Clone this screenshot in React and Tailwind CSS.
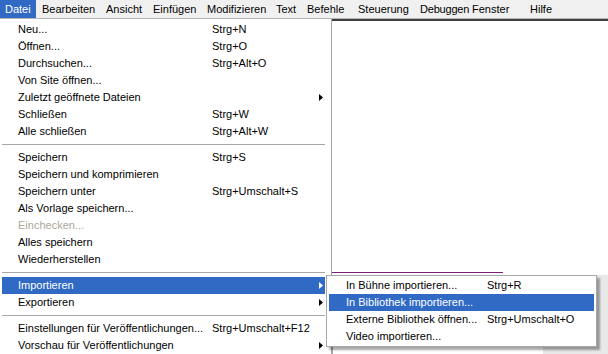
import React from 'react';

const menuBar = [
  { label: 'Datei', w: 'w-[36px] pl-[5px]', active: true },
  { label: 'Bearbeiten', w: 'w-[64px] pl-[6px]' },
  { label: 'Ansicht', w: 'w-[47px] pl-[6px]' },
  { label: 'Einfügen', w: 'w-[54px] pl-[6px]' },
  { label: 'Modifizieren', w: 'w-[69px] pl-[6px]' },
  { label: 'Text', w: 'w-[31px] pl-[6px]' },
  { label: 'Befehle', w: 'w-[51px] pl-[6px]' },
  { label: 'Steuerung', w: 'w-[62px] pl-[6px]' },
  { label: 'Debuggen', w: 'w-[52px] pl-[6px] tracking-[-0.2px]' },
  { label: 'Fenster', w: 'w-[58px] pl-[6px]' },
  { label: 'Hilfe', w: 'w-[40px] pl-[6px]' },
];

const fileMenu = [
  { label: 'Neu...', key: 'Strg+N' },
  { label: 'Öffnen...', key: 'Strg+O' },
  { label: 'Durchsuchen...', key: 'Strg+Alt+O' },
  { label: 'Von Site öffnen...' },
  { label: 'Zuletzt geöffnete Dateien', sub: true },
  { label: 'Schließen', key: 'Strg+W' },
  { label: 'Alle schließen', key: 'Strg+Alt+W' },
  'sep',
  { label: 'Speichern', key: 'Strg+S' },
  { label: 'Speichern und komprimieren' },
  { label: 'Speichern unter', key: 'Strg+Umschalt+S' },
  { label: 'Als Vorlage speichern...' },
  { label: 'Einchecken...', disabled: true },
  { label: 'Alles speichern' },
  { label: 'Wiederherstellen' },
  'sep',
  { label: 'Importieren', sub: true, active: true },
  { label: 'Exportieren', sub: true },
  'sep',
  { label: 'Einstellungen für Veröffentlichungen...', key: 'Strg+Umschalt+F12' },
  { label: 'Vorschau für Veröffentlichungen', sub: true },
];

const importMenu = [
  { label: 'In Bühne importieren...', key: 'Strg+R' },
  { label: 'In Bibliothek importieren...', active: true },
  { label: 'Externe Bibliothek öffnen...', key: 'Strg+Umschalt+O' },
  { label: 'Video importieren...' },
];

function Arrow({ white }) {
  return (
    <svg width="4" height="7" viewBox="0 0 4 7" className="ml-auto mr-[2px]">
      <path d="M0 0 L4 3.5 L0 7 Z" fill={white ? '#ffffff' : '#000000'} />
    </svg>
  );
}

function Row({ item, labelW, pl }) {
  const color = item.active ? 'bg-[#316ac5] text-white' : item.disabled ? 'text-[#aca899]' : 'text-black';
  return (
    <div className={`h-[17px] flex items-center whitespace-nowrap ${pl} ${color}`}>
      <span className={`${labelW} shrink-0`}>{item.label}</span>
      {item.key && <span>{item.key}</span>}
      {item.sub && <Arrow white={item.active} />}
    </div>
  );
}

export default function App() {
  return (
    <div
      className="relative w-[608px] h-[354px] overflow-hidden bg-white text-[11px] leading-none text-black"
      style={{ fontFamily: '"Liberation Sans", Arial, sans-serif' }}
    >
      <div className="flex h-[19px] bg-[#f0f0f0] border-b border-[#b4b4b4]">
        {menuBar.map((m) => (
          <div
            key={m.label}
            className={`h-[18px] flex items-center whitespace-nowrap ${m.w} ${m.active ? 'bg-[#316ac5] text-white' : ''}`}
          >
            {m.label}
          </div>
        ))}
      </div>

      <div className="flex h-[335px]">
        <div className="w-[332px] shrink-0 border-r border-[#a7a6aa] pl-[2px] pr-[6px] pt-[2px]">
          {fileMenu.map((item, i) =>
            item === 'sep' ? (
              <div key={i} className="h-[9px] flex items-center">
                <div className="w-full h-px bg-[#a7a6aa]" />
              </div>
            ) : (
              <Row key={i} item={item} labelW="w-[194px]" pl="pl-[16px]" />
            )
          )}
        </div>

        <div className="flex-1 flex flex-col">
          <div className="h-[2px] bg-[#404040]" />
          <div className="h-[251px]" />
          <div className="flex">
            <div className="w-[171px] h-px bg-[#7a1f7a]" />
          </div>
          <div className="flex flex-1 pt-[2px]">
            <div className="w-[211px] border-l border-[#a7a6aa]" />
            <div className="flex-1 bg-[#e8e8e8]" />
          </div>
        </div>
      </div>

      <div className="absolute left-[326px] top-[275px] w-[271px] h-[72px] bg-white border border-[#a7a6aa] px-[2px] py-[1px] shadow-[3px_3px_2px_rgba(0,0,0,0.35)]">
        {importMenu.map((item, i) => (
          <Row key={i} item={item} labelW="w-[141px]" pl="pl-[17px]" />
        ))}
      </div>
    </div>
  );
}
